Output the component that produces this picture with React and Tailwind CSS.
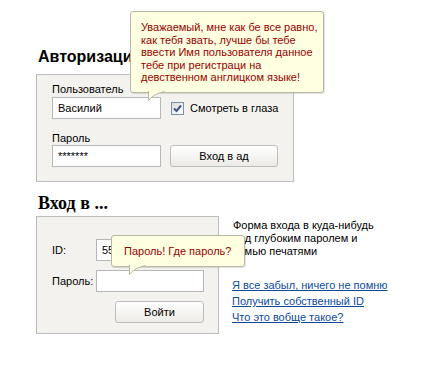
import React from 'react';

function Tail() {
  return (
    <svg className="absolute left-[17px] top-full -mt-[1px]" width="17" height="10" viewBox="0 0 17 10">
      <path d="M0.5 0 L0.5 9.5 Q5 3 17 0 Z" fill="#ffffe1" />
      <path d="M0.5 0 L0.5 9.5 Q5 3 16.5 0.5" fill="none" stroke="#b9b8a6" strokeWidth="1" />
    </svg>
  );
}

function Checkbox() {
  return (
    <span className="shrink-0 w-[13px] h-[13px] border border-[#7d8fa8] bg-gradient-to-br from-[#dcdcd7] to-white flex items-center justify-center">
      <svg width="9" height="9" viewBox="0 0 9 9">
        <path d="M1 4.5 L3.5 7 L8 1.5" fill="none" stroke="#3f5686" strokeWidth="2" />
      </svg>
    </span>
  );
}

const input = 'h-[22px] border border-[#b7b7b7] bg-white px-[5px] flex items-center';
const button = 'h-[22px] rounded-[3px] border border-[#bdbdbd] bg-gradient-to-b from-white to-[#ecebe6] flex items-center justify-center';

export default function App() {
  return (
    <div className="relative w-[433px] h-[366px] overflow-hidden bg-white text-black text-[11px] font-['Liberation_Sans',Arial,sans-serif]">
      <div className="pl-[36px] pt-[47px]">
        <h2 className="ml-[2px] h-[20px] text-[16px] leading-[20px] font-bold mb-[7px]">Авторизация</h2>

        <div className="w-[258px] h-[108px] border border-[#bdbdbd] bg-[#f4f2ee] pl-[15px] pt-[8px]">
          <div className="grid grid-cols-[109px_108px] gap-x-[9px]">
            <div className="col-span-2 h-[13px] leading-[13px] mb-[1px]">Пользователь</div>
            <div className={input + ' border-[#8c1515]'}>Василий</div>
            <div className="flex items-center gap-[6px] pl-[1px] whitespace-nowrap">
              <Checkbox />
              <span>Смотреть в глаза</span>
            </div>
            <div className="col-span-2 h-[13px] leading-[13px] mt-[13px]">Пароль</div>
            <div className={input}>*******</div>
            <div className={button}>Вход в ад</div>
          </div>
        </div>

        <h2 className="ml-[2px] mt-[10px] h-[22px] text-[18px] leading-[22px] font-bold mb-[2px] font-['Liberation_Serif',serif]">Вход в ...</h2>

        <div className="flex">
          <div className="w-[183px] h-[118px] border border-[#bdbdbd] bg-[#f4f2ee] pl-[15px] pt-[22px]">
            <div className="grid grid-cols-[44px_108px] gap-y-[9px]">
              <div className="flex items-center">ID:</div>
              <div className={input}>55</div>
              <div className="flex items-center">Пароль:</div>
              <div className={input}></div>
              <div className={button + ' col-start-2 w-[89px] justify-self-end'}>Войти</div>
            </div>
          </div>

          <div className="ml-[13px] pt-[3px]">
            <p className="leading-[13px] pl-[1px]">
              Форма входа в куда-нибудь<br />под глубоким паролем и<br />семью печатями
            </p>
            <div className="mt-[19px] flex flex-col">
              <a href="#" className="leading-[16px] text-[#0b4a9c] underline">Я все забыл, ничего не помню</a>
              <a href="#" className="leading-[16px] text-[#0b4a9c] underline">Получить собственный ID</a>
              <a href="#" className="leading-[16px] text-[#0b4a9c] underline">Что это вобще такое?</a>
            </div>
          </div>
        </div>
      </div>

      <div className="absolute left-[130px] top-[11px] w-[194px] h-[82px] rounded-[3px] border border-[#b9b8a6] bg-[#ffffe1] shadow-[1px_1px_1px_rgba(0,0,0,0.12)] pl-[10px] pt-[9px] text-[#990000] leading-[12.6px]">
        Уважаемый, мне как бе все равно,<br />
        как тебя звать, лучше бы тебе<br />
        ввести Имя пользователя данное<br />
        тебе при регистраци на<br />
        девственном англицком языке!
        <Tail />
      </div>

      <div className="absolute left-[111px] top-[235px] w-[134px] h-[32px] rounded-[3px] border border-[#b9b8a6] bg-[#ffffe1] shadow-[1px_1px_1px_rgba(0,0,0,0.12)] pl-[12px] flex items-center text-[#990000]">
        Пароль! Где пароль?
        <Tail />
      </div>
    </div>
  );
}
